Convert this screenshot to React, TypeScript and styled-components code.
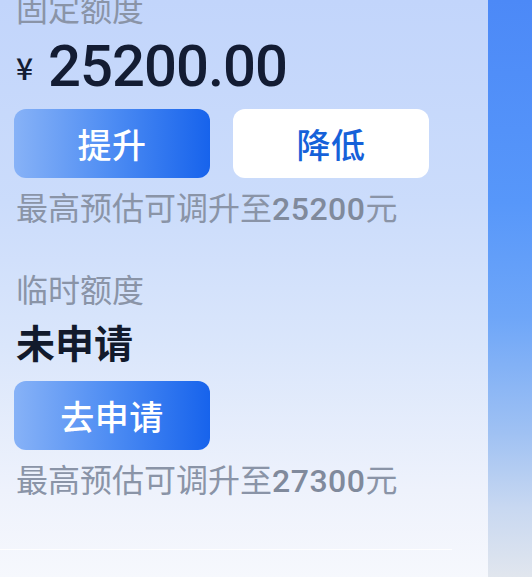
import React from "react";
import styled, { createGlobalStyle } from "styled-components";

const Global = createGlobalStyle`
  html, body { margin: 0; padding: 0; }
  body {
    width: 532px;
    height: 577px;
    overflow: hidden;
    font-family: "Noto Sans CJK SC", "Noto Sans", sans-serif;
  }
`;

const Page = styled.div`
  display: flex;
  width: 532px;
  height: 577px;
  overflow: hidden;
`;

const Panel = styled.div`
  width: 488px;
  height: 577px;
  display: flex;
  flex-direction: column;
  padding-left: 14px;
  box-sizing: border-box;
  background: linear-gradient(180deg, #c2d5fb 0%, #cbdcfb 35%, #dae6fb 60%, #eef2fc 85%, #f6f8fd 100%);
`;

const Side = styled.div`
  flex: 1;
  background: linear-gradient(180deg, #4c89f7 0%, #5797fa 35%, #6ea6f8 55%, #9fc1f3 75%, #c8d8f1 88%, #e1e6ee 100%);
`;

const Label = styled.div<{ $top: number }>`
  margin-top: ${(p) => p.$top}px;
  padding-left: 2px;
  font-size: 32px;
  line-height: 32px;
  color: #8a94a7;
`;

const AmountRow = styled.div`
  margin-top: 10px;
  padding-left: 2px;
  display: flex;
  align-items: center;
  gap: 15px;
  color: #131c33;
`;

const Yen = styled.span`
  font-size: 30px;
  line-height: 30px;
  font-weight: 500;
  margin-top: 1px;
`;

const Amount = styled.span`
  font-family: Roboto, "Noto Sans", sans-serif;
  font-size: 58px;
  line-height: 67px;
  font-weight: 500;
  letter-spacing: -1px;
`;

const Status = styled.div`
  margin-top: 18px;
  padding-left: 2px;
  font-size: 39px;
  line-height: 38px;
  font-weight: 700;
  color: #121a2c;
`;

const ButtonRow = styled.div<{ $top: number }>`
  margin-top: ${(p) => p.$top}px;
  display: flex;
  gap: 23px;
`;

const Btn = styled.div<{ $primary?: boolean }>`
  width: 196px;
  height: 69px;
  border-radius: 12px;
  display: flex;
  align-items: center;
  justify-content: center;
  font-size: 34px;
  font-weight: 500;
  letter-spacing: 0.5px;
  background: ${(p) =>
    p.$primary ? "linear-gradient(90deg, #87b2f7 0%, #4d8cf3 50%, #1763ec 100%)" : "#ffffff"};
  color: ${(p) => (p.$primary ? "#ffffff" : "#1561d9")};
`;

const Hint = styled.div`
  margin-top: 12px;
  padding-left: 2px;
  font-size: 32px;
  line-height: 32px;
  color: #8a94a7;
  white-space: nowrap;
`;

const Num = styled.span`
  font-family: Roboto, "Noto Sans", sans-serif;
  font-weight: 500;
  color: #808a9c;
  letter-spacing: 0.5px;
`;

const Divider = styled.div`
  margin-top: auto;
  margin-bottom: 27px;
  margin-left: -14px;
  width: 452px;
  height: 1px;
  background: rgba(255, 255, 255, 0.9);
`;

export default function App() {
  return (
    <>
      <Global />
      <Page>
        <Panel>
          <Label $top={-9}>固定额度</Label>
          <AmountRow>
            <Yen>¥</Yen>
            <Amount>25200.00</Amount>
          </AmountRow>
          <ButtonRow $top={9}>
            <Btn $primary>提升</Btn>
            <Btn>降低</Btn>
          </ButtonRow>
          <Hint>
            最高预估可调升至<Num>25200</Num>元
          </Hint>
          <Label $top={47}>临时额度</Label>
          <Status>未申请</Status>
          <ButtonRow $top={21}>
            <Btn $primary>去申请</Btn>
          </ButtonRow>
          <Hint>
            最高预估可调升至<Num>27300</Num>元
          </Hint>
          <Divider />
        </Panel>
        <Side />
      </Page>
    </>
  );
}
